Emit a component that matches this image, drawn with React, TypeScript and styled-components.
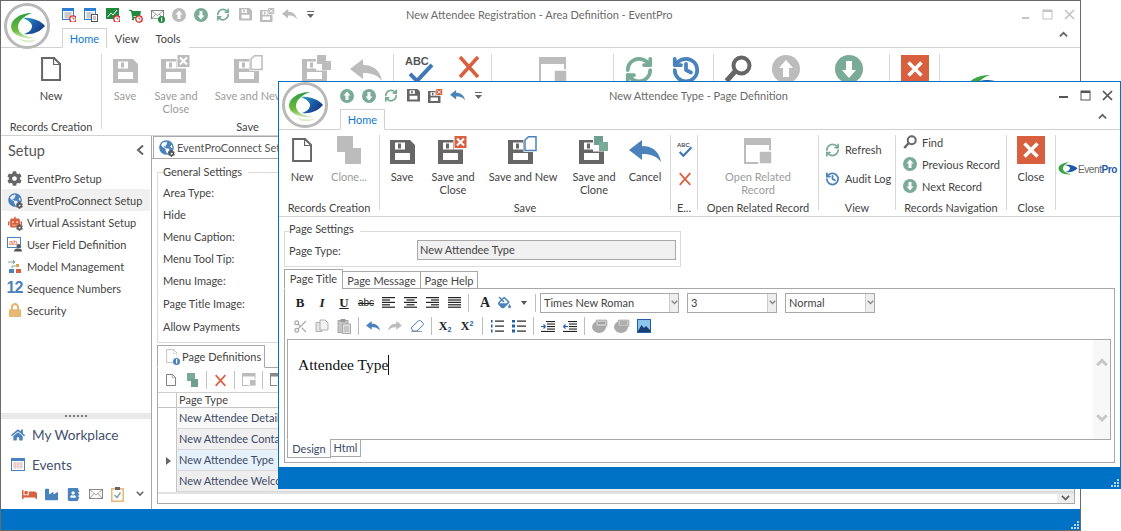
import React from "react";
import styled, { createGlobalStyle } from "styled-components";
import { RefreshCw, History, Scissors } from "lucide-react";
import { FaCog, FaGlobeAmericas, FaRobot, FaLock, FaHome, FaBed, FaIndustry, FaAddressBook, FaShoppingCart, FaFillDrip } from "react-icons/fa";

const SAGE = "#7aab98";
const GRAY = "#bcbcbc";
const DARK = "#666666";
const BLUE = "#4a82bc";
const RED = "#d9603f";
const UI = 'Lato, "Open Sans", sans-serif';
const FS = "11px";

const Global = createGlobalStyle`
  html, body { margin: 0; padding: 0; background: #fff; }
  #root { width: 1121px; height: 531px; position: relative; overflow: hidden; font-family: ${UI}; font-size: ${FS}; color: #444; }
  * { box-sizing: border-box; }
`;

/* ---------- icons ---------- */
const Svg = styled.svg`display: block; flex: none;`;
type IP = { s?: number; c?: string };

const LogoMark = ({ s = 46 }: { s?: number }) => (
  <Svg width={s} height={s} viewBox="0 0 46 46">
    <defs>
      <linearGradient id="lgG" x1="0" y1="0" x2="0" y2="1"><stop offset="0" stopColor="#2f9e3f" /><stop offset="0.7" stopColor="#6cbc3c" /><stop offset="1" stopColor="#d6ebc0" /></linearGradient>
      <linearGradient id="lgB" x1="0" y1="0" x2="1" y2="0.6"><stop offset="0" stopColor="#27a3c9" /><stop offset="0.6" stopColor="#1c5aa6" /><stop offset="1" stopColor="#17397f" /></linearGradient>
    </defs>
    <circle cx="23" cy="23" r="21.5" fill="#fff" stroke="#b9b9b9" strokeWidth="3" />
    <path d="M28 10C15 10 7 17 7 24C8 32 18 37 34 35C23 35 14 31 14 24C14 18 20 13 28 10Z" fill="url(#lgG)" />
    <path d="M19 15C28 14 37 18 41 23C36 29 28 32 20 31C26 29 28 26 28 23C28 20 24 17 19 15Z" fill="url(#lgB)" />
    <path d="M14 35C21 38 28 38 33 36.500C27 41 18 40 14 35Z" fill="#d8ecc6" />
  </Svg>
);

const PageI = ({ s = 24, c = DARK, sw = 2 }: IP & { sw?: number }) => (
  <Svg width={s * 0.84} height={s} viewBox="0 0 20 24">
    <path d="M1 1H13L19 7V23H1Z" fill="#fff" stroke={c} strokeWidth={sw} strokeLinejoin="miter" />
    <path d="M12.500 1V7.500H19" fill="none" stroke={c} strokeWidth={sw * 0.6} />
  </Svg>
);
const CloneI = ({ s = 28, c = GRAY, c2 }: IP & { c2?: string }) => (
  <Svg width={s * 0.857} height={s} viewBox="0 0 24 28">
    <rect x="0" y="0" width="16" height="16" fill={c} />
    <rect x="8" y="12" width="16" height="16" fill={c2 ?? c} />
  </Svg>
);
const FloppyBody = ({ c, y = 4 }: { c: string; y?: number }) => (
  <g transform={`translate(0 ${y})`}>
    <path fillRule="evenodd" d="M0 0H20L25 5V24H0Z M5 13V20H20V13Z" fill={c} />
    <rect x="5" y="2.500" width="10" height="7" fill="#fff" />
    <rect x="8" y="3.500" width="3" height="5" fill={c} />
  </g>
);
const Floppy = ({ c = DARK, w = 25 }: { c?: string; w?: number }) => (
  <Svg width={w} height={w * 24 / 25} viewBox="0 0 25 24"><FloppyBody c={c} y={0} /></Svg>
);
type Badge = "x" | "new" | "clone";
const BadgeG = ({ b, c }: { b: Badge; c?: string }) => {
  if (b === "x")
    return (
      <g>
        <rect x="15.500" y="-0.500" width="14" height="14" fill="#fff" />
        <rect x="16.500" y="0" width="12" height="12" fill={c ?? RED} />
        <path d="M19 2.500L26 9.500M26 2.500L19 9.500" stroke="#fff" strokeWidth="2" />
      </g>
    );
  if (b === "new")
    return (
      <g>
        <path d="M16.500 3.500L20 0H28.500V15H16.500Z" fill="#fff" stroke="#fff" strokeWidth="2" />
        <path d="M17 4L20.500 0.700H28V14.500H17Z" fill="#fff" stroke={c ?? BLUE} strokeWidth="1.500" />
      </g>
    );
  return (
    <g>
      <rect x="14" y="-0.500" width="16" height="16" fill="#fff" />
      <rect x="15" y="0" width="9" height="9" fill={c ?? "#6f9f90"} />
      <rect x="20" y="6" width="9" height="9" fill={c ?? SAGE} />
    </g>
  );
};
const FloppyB = ({ b, c = DARK, bc, w = 30 }: { b: Badge; c?: string; bc?: string; w?: number }) => (
  <Svg width={w} height={w * 28 / 30} viewBox="0 0 30 28"><FloppyBody c={c} /><BadgeG b={b} c={bc} /></Svg>
);
const UndoI = ({ w = 32, c = BLUE }: { w?: number; c?: string }) => (
  <Svg width={w} height={w * 22 / 32} viewBox="0 0 32 22">
    <path d="M0 10L13 0V6C22 6 30 10 32 22C27 15 20 14 13 14V20Z" fill={c} />
  </Svg>
);
const RedoI = ({ w = 14, c = GRAY }: { w?: number; c?: string }) => (
  <Svg width={w} height={w * 22 / 32} viewBox="0 0 32 22">
    <path d="M32 10L19 0V6C10 6 2 10 0 22C5 15 12 14 19 14V20Z" fill={c} />
  </Svg>
);
const UpI = ({ s = 14, c = SAGE }: IP) => (
  <Svg width={s} height={s} viewBox="0 0 28 28">
    <circle cx="14" cy="14" r="14" fill={c} />
    <path d="M14 5L21 13H17V22H11V13H7Z" fill="#fff" />
  </Svg>
);
const DownI = ({ s = 14, c = SAGE }: IP) => (
  <Svg width={s} height={s} viewBox="0 0 28 28">
    <circle cx="14" cy="14" r="14" fill={c} />
    <path d="M14 23L21 15H17V6H11V15H7Z" fill="#fff" />
  </Svg>
);
const CrossI = ({ s = 24, c = RED, sw = 3.500 }: IP & { sw?: number }) => (
  <Svg width={s} height={s} viewBox="0 0 24 24">
    <path d="M3 2L21 22M21 2L3 22" stroke={c} strokeWidth={sw} />
  </Svg>
);
const SpellI = ({ w = 30 }: { w?: number }) => (
  <Svg width={w} height={w * 0.93} viewBox="0 0 30 28">
    <text x="0" y="10" fontFamily='"Liberation Sans", sans-serif' fontWeight="700" fontSize="11" fill="#555">ABC</text>
    <path d="M5 19L12 26L27 10" fill="none" stroke="#3f78b5" strokeWidth="4" />
  </Svg>
);
const RelatedI = ({ s = 28, c = GRAY }: IP) => (
  <Svg width={s} height={s} viewBox="0 0 28 28">
    <rect x="1" y="1" width="25" height="24" fill="#fff" stroke={c} strokeWidth="2" />
    <rect x="1" y="1" width="25" height="6" fill={c} />
    <rect x="15" y="13" width="13" height="13" fill={c} stroke="#fff" strokeWidth="1.500" />
  </Svg>
);
const MagnifierI = ({ s = 28, c = DARK }: IP) => (
  <Svg width={s} height={s} viewBox="0 0 28 28">
    <circle cx="17.500" cy="10.500" r="8" fill="#fff" stroke={c} strokeWidth="4" />
    <path d="M11 16.500L2.500 26" stroke={c} strokeWidth="5" />
  </Svg>
);
const CloseBoxI = ({ s = 28 }: IP) => (
  <Svg width={s} height={s} viewBox="0 0 28 28">
    <rect width="28" height="28" fill={RED} />
    <path d="M7.500 7.500L20.500 20.500M20.500 7.500L7.500 20.500" stroke="#fff" strokeWidth="3.500" />
  </Svg>
);
const CaretLines = () => (
  <Svg width={14} height={10} viewBox="0 0 14 10">
    <rect x="3" y="1" width="7" height="1" fill="#666" />
    <path d="M3 4H10L6.500 8Z" fill="#666" />
  </Svg>
);
const Chevron = ({ up, c = "#777", w = 10, sw = 2 }: { up?: boolean; c?: string; w?: number; sw?: number }) => (
  <Svg width={w} height={w * 0.7} viewBox="0 0 10 7">
    <path d={up ? "M1 6L5 2L9 6" : "M1 1L5 5L9 1"} fill="none" stroke={c} strokeWidth={sw} />
  </Svg>
);
const ChevronLeft = () => (
  <Svg width={8} height={10} viewBox="0 0 8 10">
    <path d="M7 0.500L2 5L7 9.500" fill="none" stroke="#666" strokeWidth="2" />
  </Svg>
);
const ClockBadge = ({ x = 8, y = 8 }: { x?: number; y?: number }) => (
  <g>
    <circle cx={x + 3} cy={y + 3} r="3.200" fill="#fff" stroke="#e0262b" strokeWidth="1.300" />
    <path d={`M${x + 3} ${y + 1.200}V${y + 3}H${x + 4.600}`} fill="none" stroke="#333" strokeWidth="0.700" />
  </g>
);
const CalAlarm = () => (
  <Svg width={14} height={14} viewBox="0 0 14 14">
    <rect x="0.500" y="0.500" width="11" height="11" fill="#fff" stroke="#2a7fd4" />
    <rect x="0.500" y="0.500" width="11" height="2.500" fill="#2a7fd4" />
    <path d="M2 5H10M2 7H10M2 9H10M4 4V11M6 4V11M8 4V11" stroke="#999" strokeWidth="0.600" />
    <ClockBadge />
  </Svg>
);
const CalList = () => (
  <Svg width={14} height={14} viewBox="0 0 14 14">
    <rect x="0.500" y="0.500" width="11" height="11" fill="#fff" stroke="#2a7fd4" />
    <rect x="0.500" y="0.500" width="11" height="2.500" fill="#2a7fd4" />
    <path d="M2 5H10M2 7H10M2 9H10M4 4V11M6 4V11" stroke="#999" strokeWidth="0.600" />
    <rect x="7.500" y="6.500" width="6" height="7" fill="#fff" stroke="#555" />
    <path d="M9 9H12M9 11H12" stroke="#555" strokeWidth="0.700" />
  </Svg>
);
const ChartAlarm = () => (
  <Svg width={14} height={14} viewBox="0 0 14 14">
    <rect x="0" y="0" width="13" height="11" fill="#1f8a3b" />
    <path d="M1.500 9L5 5L7 7L11 2" fill="none" stroke="#fff" strokeWidth="1" />
    <ClockBadge />
  </Svg>
);
const CartAlarm = () => (
  <Wrap $s={14}>
    <FaShoppingCart size={12} color="#1f8a3b" />
    <Over $r={-1} $b={-1}><Svg width={8} height={8} viewBox="0 0 8 8"><ClockBadge x={1} y={1} /></Svg></Over>
  </Wrap>
);
const MailI = ({ w = 14, c = "#888" }: { w?: number; c?: string }) => (
  <Svg width={w} height={w * 0.72} viewBox="0 0 14 10">
    <rect x="0.500" y="0.500" width="13" height="9" fill="#fff" stroke={c} />
    <path d="M0.500 0.500L7 6L13.500 0.500M0.500 9.500L5 4.500M13.500 9.500L9 4.500" fill="none" stroke={c} strokeWidth="0.800" />
  </Svg>
);
const MailBadge = () => (
  <Wrap $s={14}>
    <MailI w={13} c="#777" />
    <Over $r={-1} $b={-1}><Svg width={7} height={7} viewBox="0 0 7 7"><circle cx="3.500" cy="3.500" r="3.500" fill="#1f8a3b" /><rect x="3" y="1.500" width="1.200" height="4" fill="#fff" /></Svg></Over>
  </Wrap>
);
const Lines = ({ kind }: { kind: "l" | "c" | "r" | "j" }) => {
  const short = 8, long = 13;
  const rows = [long, short, long, short, long];
  return (
    <Svg width={13} height={11} viewBox="0 0 13 11">
      {rows.map((len, i) => {
        const L = kind === "j" ? long : len;
        const x = kind === "c" ? (13 - L) / 2 : kind === "r" ? 13 - L : 0;
        return <rect key={i} x={x} y={i * 2.4} width={L} height="1.200" fill="#222" />;
      })}
    </Svg>
  );
};
const ListI = ({ num }: { num?: boolean }) => (
  <Svg width={14} height={13} viewBox="0 0 14 13">
    {[1, 6, 11].map((y) => (
      <g key={y}>
        {num ? <rect x="1" y={y - 1.500} width="1.500" height="3" fill="#1d5fa8" /> : <rect x="0" y={y - 1.500} width="3" height="3" fill="#1d5fa8" />}
        <rect x="5" y={y - 0.500} width="9" height="1.200" fill="#222" />
      </g>
    ))}
  </Svg>
);
const IndentI = ({ out }: { out?: boolean }) => (
  <Svg width={14} height={11} viewBox="0 0 14 11">
    <rect x="5" y="0" width="9" height="1.100" fill="#222" />
    <rect x="6" y="2.500" width="8" height="1.100" fill="#222" />
    <rect x="6" y="5" width="8" height="1.100" fill="#222" />
    <rect x="6" y="7.500" width="8" height="1.100" fill="#222" />
    <rect x="0" y="9.900" width="14" height="1.100" fill="#222" />
    <path d={out ? "M0.500 5.500H5M0.500 5.500L2.500 3.500M0.500 5.500L2.500 7.500" : "M0 5.500H4.500M4.500 5.500L2.500 3.500M4.500 5.500L2.500 7.500"} stroke="#1d5fa8" strokeWidth="1.200" fill="none" />
  </Svg>
);
const CopyI = () => (
  <Svg width={14} height={14} viewBox="0 0 14 14">
    <path d="M1 3.500H7V12.500H1Z" fill="#e4e4e4" stroke="#b0b0b0" />
    <path d="M5 1H10L13 4V11H5Z" fill="#f2f2f2" stroke="#b0b0b0" />
  </Svg>
);
const PasteI = () => (
  <Svg width={14} height={15} viewBox="0 0 14 15">
    <rect x="1" y="1.500" width="10" height="12" fill="#c4c4c4" stroke="#aaa" />
    <rect x="3.500" y="0" width="5" height="3" fill="#999" />
    <rect x="5.500" y="5" width="8" height="9.500" fill="#e0e0e0" stroke="#aaa" />
    <path d="M7 8H12M7 10H12M7 12H12" stroke="#aaa" />
  </Svg>
);
const EraserI = () => (
  <Svg width={14} height={12} viewBox="0 0 14 12">
    <path d="M1 8L8 1.200C9 .3 10 .3 11 1L13 3C13.600 3.800 13.500 4.600 13 5.200L7 11H3Z" fill="#fff" stroke="#4a7db5" />
    <path d="M1 11.500H12" stroke="#888" strokeWidth="0.800" />
  </Svg>
);
const StampI = ({ bars }: { bars?: boolean }) => (
  <Svg width={16} height={14} viewBox="0 0 16 14">
    <ellipse cx="7" cy="8" rx="7" ry="6" fill="#aaa" />
    <rect x="4" y="1" width="11" height="6.500" rx="1" fill="#c8c8c8" stroke="#999" strokeWidth="0.600" />
    {bars ? <path d="M6 3H13M6 5H13" stroke="#888" strokeWidth="0.800" /> : <path d="M6 4H13" stroke="#888" strokeWidth="1.200" />}
  </Svg>
);
const PictureI = () => (
  <Svg width={14} height={14} viewBox="0 0 14 14">
    <rect x="0.500" y="0.500" width="13" height="13" fill="#8cc4ea" stroke="#1d5fa8" />
    <path d="M1 12L4.500 6L7 9L9 7L13 11V13H1Z" fill="#173f73" />
  </Svg>
);
const Grip = () => (
  <Svg width={9} height={9} viewBox="0 0 9 9">
    {[[7, 1], [4, 4], [7, 4], [1, 7], [4, 7], [7, 7]].map(([x, y]) => (
      <rect key={`${x}${y}`} x={x} y={y} width="2" height="2" fill="#b9d4ec" />
    ))}
  </Svg>
);
const SmallLogo = ({ s = 20 }: { s?: number }) => (
  <Svg width={s} height={s * 0.7} viewBox="0 0 40 28">
    <path d="M22 1C10 1 1 6 1 13C1 21 14 27 30 24C19 24 10 20 10 13C10 8 15 3 22 1Z" fill="#3aa63f" />
    <path d="M13 6C24 4 35 8 39 13C33 19 24 22 15 20C22 18 24 15 24 12C24 9 19 7 13 6Z" fill="#1c5aa6" />
  </Svg>
);
const ModelI = () => (
  <Svg width={15} height={15} viewBox="0 0 15 15">
    <path d="M1 3H8M8 3L6 1.500M8 3L6 4.500" stroke="#8aa98e" strokeWidth="1.200" fill="none" />
    <rect x="9" y="5" width="3" height="3" fill="#e0a24f" />
    <rect x="2" y="10" width="5" height="4" fill="#4a82bc" />
    <rect x="9" y="10" width="5" height="4" fill="#d9603f" />
    <path d="M9 7H5V9" stroke="#7aab98" fill="none" />
  </Svg>
);
const FieldI = () => (
  <Wrap $s={15}>
    <Svg width={15} height={15} viewBox="0 0 15 15">
      <rect x="0.500" y="0.500" width="13" height="10" fill="#fff" stroke="#4a82bc" />
      <text x="2" y="8" fontSize="7.500" fontFamily='"Liberation Sans", sans-serif' fill="#d9603f">ab</text>
      <circle cx="11.500" cy="9" r="2" fill="#555" />
      <path d="M7 14.500C7 12 9 11.500 11.500 11.500C14 11.500 15 12.500 15 14.500Z" fill="#555" />
    </Svg>
  </Wrap>
);
const CalSide = () => (
  <Svg width={14} height={13} viewBox="0 0 14 13">
    <rect x="0.500" y="0.500" width="13" height="12" fill="#fff" stroke="#4a82bc" />
    <rect x="1" y="1" width="12" height="2" fill="#4a82bc" />
    <path d="M2 5H12M2 7H12M2 9H12M4 4V11M7 4V11M10 4V11" stroke="#d8a0a0" strokeWidth="0.600" />
  </Svg>
);
const ClipI = () => (
  <Svg width={13} height={15} viewBox="0 0 13 15">
    <rect x="0.800" y="1.800" width="11.400" height="12.400" fill="#fff" stroke="#e5b876" strokeWidth="1.500" />
    <rect x="4" y="0" width="5" height="3" fill="#666" />
    <path d="M3.500 8L6 10.500L9.500 5.500" stroke="#7aab98" strokeWidth="1.500" fill="none" />
  </Svg>
);
const TinyGear = styled(FaCog)`position: absolute; right: -1px; bottom: -1px; background: transparent;`;

/* ---------- structure ---------- */
const Wrap = styled.span<{ $s: number }>`
  position: relative; display: inline-flex; align-items: center; justify-content: center; flex: none;
  width: ${(p) => p.$s}px; height: ${(p) => p.$s}px;
`;
const Over = styled.span<{ $r: number; $b: number }>`
  position: absolute; right: ${(p) => p.$r}px; bottom: ${(p) => p.$b}px; display: block;
`;
const Win = styled.section<{ $x: number; $y: number; $w: number; $h: number; $border: string }>`
  position: absolute; left: ${(p) => p.$x}px; top: ${(p) => p.$y}px; width: ${(p) => p.$w}px; height: ${(p) => p.$h}px;
  border: 1px solid ${(p) => p.$border}; background: #fff; display: flex; flex-direction: column;
`;
const Header = styled.header<{ $h: number }>`
  flex: none; position: relative; height: ${(p) => p.$h}px; padding-left: 61px; border-bottom: 1px solid #d2d2d2;
  display: flex; flex-direction: column;
`;
const LogoSlot = styled.div<{ $top: number }>`
  position: absolute; left: 3px; top: ${(p) => p.$top}px; z-index: 2;
`;
const TitleRow = styled.div`flex: none; height: 27px; display: flex; align-items: center;`;
const Qat = styled.div`display: flex; gap: 8px; align-items: center; flex: none;`;
const QatCell = styled.span`width: 14px; height: 14px; display: flex; align-items: center; justify-content: center; flex: none;`;
const Title = styled.div<{ $left: number }>`margin-left: ${(p) => p.$left}px; margin-top: -1px; color: #6a6a6a; font-size: ${FS}; white-space: nowrap;`;
const WinCtl = styled.div<{ $right: number }>`margin-left: auto; margin-right: ${(p) => p.$right}px; display: flex;`;
const WinBtn = styled.span`width: 22px; display: flex; justify-content: center; align-items: center;`;
const TabRow = styled.div`flex: 1; display: flex; align-items: stretch; position: relative;`;
const RibbonTab = styled.div<{ $active?: boolean; $w: number }>`
  width: ${(p) => p.$w}px; margin-bottom: -1px; display: flex; align-items: center; justify-content: center; font-size: ${FS};
  color: ${(p) => (p.$active ? "#1377cf" : "#444")}; background: #fff;
  border: 1px solid ${(p) => (p.$active ? "#d2d2d2" : "transparent")}; border-bottom: 1px solid ${(p) => (p.$active ? "#fff" : "transparent")};
`;
const Collapse = styled.span<{ $right: number }>`margin-left: auto; margin-right: ${(p) => p.$right}px; align-self: center; margin-top: -6px;`;

const Ribbon = styled.div<{ $h: number; $top: number }>`
  flex: none; height: ${(p) => p.$h}px; padding-top: ${(p) => p.$top}px; border-bottom: 1px solid #d2d2d2; display: flex; align-items: flex-start;
`;
const Group = styled.div<{ $w: number; $plain?: boolean }>`
  flex: none; width: ${(p) => p.$w}px; height: 75px; display: flex; flex-direction: column;
  border-right: 1px solid ${(p) => (p.$plain ? "transparent" : "#d8d8d8")};
`;
const GroupBody = styled.div<{ $col?: boolean; $center?: boolean; $pad?: number; $mt?: number }>`
  height: 66px; flex: none; display: flex; flex-direction: ${(p) => (p.$col ? "column" : "row")};
  justify-content: ${(p) => (p.$center ? "center" : "flex-start")}; padding-left: ${(p) => p.$pad ?? 0}px;
  ${(p) => (p.$mt ? `margin-top: ${p.$mt}px; margin-bottom: ${-p.$mt}px;` : "")}
`;
const GroupLabel = styled.div`height: 14px; line-height: 14px; text-align: center; white-space: nowrap; color: #444; font-size: ${FS};`;
const Big = styled.div<{ $w: number; $off?: boolean }>`
  flex: none; width: ${(p) => p.$w}px; display: flex; flex-direction: column; align-items: center;
  text-align: center; line-height: 13px; white-space: nowrap; color: ${(p) => (p.$off ? "#9c9c9c" : "#444")}; font-size: ${FS};
`;
const BigIcon = styled.div<{ $pt?: number }>`height: 35px; flex: none; display: flex; align-items: flex-start; justify-content: center; padding-top: ${(p) => p.$pt ?? 1}px;`;
const Small = styled.div<{ $h: number }>`
  flex: none; height: ${(p) => p.$h}px; display: flex; align-items: center; gap: 5px; white-space: nowrap; color: #444; font-size: ${FS};
`;
const SmallIcon = styled.span`width: 15px; display: flex; justify-content: center; flex: none;`;
const MiniBrand = styled.div<{ $left: number; $top: number }>`
  display: flex; align-items: center; margin-left: ${(p) => p.$left}px; margin-top: ${(p) => p.$top}px; font-family: "Liberation Sans", sans-serif; font-size: 10px; color: #666; letter-spacing: -0.4px;
  b { color: #1c5aa6; }
`;
const Status = styled.footer`
  flex: none; height: 21px; background: #0072c6; display: flex; justify-content: flex-end; align-items: flex-end; padding: 0 1px 1px 0;
`;

/* window 1 body */
const Desk = styled.div`flex: 1; min-height: 0; display: flex;`;
const Side = styled.aside`flex: none; width: 151px; border-right: 1px solid #a8a8a8; display: flex; flex-direction: column;`;
const SideHead = styled.div`
  flex: none; height: 32px; padding: 0 7px 4px 7px; display: flex; align-items: center; justify-content: space-between;
  font-size: 14.5px; color: #555;
`;
const SideList = styled.div`flex: 1; padding: 0 1px; margin-top: -1px;`;
const SideItem = styled.div<{ $on?: boolean }>`
  height: 22px; display: flex; align-items: center; gap: 5px; padding-left: 5px; color: #444; white-space: nowrap;
  background: ${(p) => (p.$on ? "#f0f0f0" : "transparent")}; font-size: ${FS};
`;
const Splitter = styled.div`
  flex: none; height: 6px; background: #e9e9e9; display: flex; justify-content: center; align-items: center; gap: 2px;
  i { width: 2px; height: 2px; background: #777; display: block; }
`;
const NavItem = styled.div`
  flex: none; height: 30px; display: flex; align-items: center; gap: 7px; padding: 1px 0 0 10px; font-size: 13.6px; color: #44506e;
`;
const NavTray = styled.div`
  flex: none; height: 30px; display: flex; align-items: center; padding-left: 21px; gap: 7px;
`;
const TrayCell = styled.span`width: 15px; display: flex; justify-content: center; flex: none;`;
const Main = styled.main`flex: 1; min-width: 0; display: flex; flex-direction: column;`;
const DocBar = styled.div`
  flex: none; height: 23px; border-bottom: 1px solid #a8a8a8; padding-left: 1px; display: flex;
`;
const DocTab = styled.div`
  width: 300px; height: 22px; border: 1px solid #a8a8a8; border-bottom: 0; display: flex; align-items: center; gap: 3px; padding-left: 4px; white-space: nowrap; color: #555;
`;
const MainPad = styled.div`flex: 1; min-height: 0; display: flex; flex-direction: column; padding: 0 5px 5px 5px;`;
const Box = styled.fieldset<{ $w?: number; $h: number; $mt: number; $ml?: number }>`
  flex: none; margin: ${(p) => p.$mt}px 0 0 ${(p) => p.$ml ?? 0}px; padding: 0 0 0 ${(p) => (p.$w ? 4 : 5)}px; min-width: 0; border: 1px solid #dadada;
  height: ${(p) => p.$h}px; ${(p) => (p.$w ? `width: ${p.$w}px;` : "")}
`;
const Legend = styled.legend<{ $pb?: number }>`
  padding: 0 6px 0 0; padding-bottom: ${(p) => p.$pb ?? 0}px; margin-left: 0; line-height: 14px; color: #444; font-size: ${FS}; background: transparent;
`;
const FieldRow = styled.div`
  height: 22px; display: flex; align-items: center; color: #444; white-space: nowrap;
  &:nth-child(n+5) { height: 23px; }
`;
const FieldStack = styled.div`padding-top: 2px;`;
const PanelTabs = styled.div`flex: none; height: 22px; margin-top: 2px; display: flex; align-items: flex-end;`;
const PanelTab = styled.div`
  width: 108px; height: 23px; margin-bottom: -1px; position: relative; z-index: 1; background: #fff; border: 1px solid #a8a8a8; border-bottom-color: #fff;
  display: flex; align-items: center; gap: 3px; padding: 0 0 1px 6px; color: #444; white-space: nowrap;
`;
const Panel = styled.div`flex: 1; min-height: 0; border: 1px solid #a8a8a8; display: flex; flex-direction: column;`;
const MiniBar = styled.div`flex: none; height: 24px; display: flex; align-items: center; padding-left: 3px;`;
const MiniCell = styled.span`width: 21px; display: flex; align-items: center; justify-content: center; flex: none;`;
const MiniSep = styled.i<{ $h?: number }>`
  display: block; flex: none; width: 1px; height: ${(p) => p.$h ?? 18}px; background: #c4c4c4; margin: 0 3px;
`;
const GridBlock = styled.div`flex: 1; min-height: 0;`;
const GridHead = styled.div`
  height: 16px; border-top: 1px solid #d0d0d0; border-bottom: 1px solid #c4c4c4; padding-left: 18px; display: flex;
`;
const GridHeadCell = styled.div`flex: 1; border-left: 1px solid #c4c4c4; padding-left: 2px; line-height: 14px; color: #444;`;
const GridRow = styled.div<{ $bg: string }>`height: 21px; display: flex;`;
const RowMark = styled.div`width: 18px; flex: none; display: flex; align-items: center; justify-content: center; padding-left: 2px;`;
const RowCell = styled.div<{ $bg: string }>`
  flex: 1; background: ${(p) => p.$bg}; border-left: 1px solid #c4c4c4; border-bottom: 1px solid #d8d8d8; padding-left: 2px; line-height: 20px; color: #3d4a68; white-space: nowrap;
`;
const Tri = styled.i`display: block; width: 0; height: 0; border-left: 5px solid #666; border-top: 4px solid transparent; border-bottom: 4px solid transparent;`;
const HScroll = styled.div`flex: none; height: 11px; border-top: 2px solid #e2e2e2; display: flex; justify-content: flex-end;`;
const HScrollBtn = styled.div`width: 17px; background: #eee; display: flex; align-items: center; justify-content: center;`;

/* window 2 body */
const Form = styled.div`flex: 1; min-height: 0; display: flex; flex-direction: column; padding: 0 5px 4px 5px;`;
const InputRow = styled.div`display: flex; align-items: center; height: 20px;`;
const InputLabel = styled.label`width: 128px; flex: none; color: #444;`;
const ReadOnly = styled.div`
  width: 259px; height: 20px; border: 1px solid #a8a8a8; background: #f0f0f0; padding-left: 2px; line-height: 18px; color: #444;
`;
const EdTabs = styled.div`flex: none; height: 19px; margin-top: 2px; display: flex; align-items: flex-end; position: relative; z-index: 1;`;
const EdTab = styled.div<{ $w: number; $on?: boolean }>`
  width: ${(p) => p.$w}px; height: ${(p) => (p.$on ? 20 : 18)}px; margin-bottom: -1px; background: #fff; border: 1px solid #a8a8a8; margin-left: ${(p) => (p.$on ? 0 : -1)}px;
  border-bottom-color: ${(p) => (p.$on ? "#fff" : "#a8a8a8")}; display: flex; align-items: center; justify-content: center; color: #444; white-space: nowrap; padding-bottom: ${(p) => (p.$on ? 1 : 0)}px;
`;
const EdPanel = styled.div`flex: 1; min-height: 0; border: 1px solid #a8a8a8; padding: 0 3px 0 2px; display: flex; flex-direction: column;`;
const ToolRow = styled.div<{ $h: number; $pb?: number }>`flex: none; height: ${(p) => p.$h}px; padding-bottom: ${(p) => p.$pb ?? 0}px; display: flex; align-items: center; padding-left: 2px;`;
const Tool = styled.span<{ $w?: number }>`
  width: ${(p) => p.$w ?? 22}px; height: 20px; flex: none; display: flex; align-items: center; justify-content: center;
  color: #222; font-family: "Liberation Serif", serif;
`;
const SerifB = styled.b<{ $size?: number }>`font-size: ${(p) => p.$size ?? 13}px; font-weight: 700;`;
const SerifI = styled.i`font-size: 13px; font-weight: 700;`;
const SerifU = styled.b`font-size: 13px; font-weight: 700; text-decoration: underline;`;
const Strike = styled.span`font-family: "Liberation Sans", sans-serif; font-size: 10px; text-decoration: line-through;`;
const ScriptB = styled.b`font-size: 12px; position: relative;`;
const Sub = styled.sub`font-size: 7px; color: #1d5fa8; font-family: "Liberation Sans", sans-serif; vertical-align: -2px; line-height: 0;`;
const Sup = styled.sup`font-size: 7px; color: #1d5fa8; font-family: "Liberation Sans", sans-serif; vertical-align: 4px; line-height: 0;`;
const ToolSep = styled.i<{ $l?: number; $r?: number }>`
  display: block; flex: none; width: 1px; height: 18px; background: #bdbdbd; margin: 0 ${(p) => p.$r ?? 3}px 0 ${(p) => p.$l ?? 3}px;
`;
const Select = styled.div<{ $w: number; $ml: number }>`
  flex: none; width: ${(p) => p.$w}px; height: 20px; margin-left: ${(p) => p.$ml}px; border: 1px solid #a8a8a8; display: flex; align-items: center;
  padding-left: 3px; color: #444; justify-content: space-between;
`;
const SelectBtn = styled.span`width: 9px; height: 18px; background: #eee; border-left: 1px solid #ccc; display: flex; align-items: center; justify-content: center;`;
const Editor = styled.div`flex: none; height: 101px; border: 1px solid #a8a8a8; display: flex;`;
const EditArea = styled.div`flex: 1; padding: 15px 0 0 10px;`;
const EditText = styled.span`
  font-family: "Liberation Serif", serif; font-size: 15.500px; line-height: 20px; color: #111; border-right: 1px solid #111; display: inline-block;
`;
const VScroll = styled.div`
  flex: none; width: 17px; background: #f8f8f8; display: flex; flex-direction: column; align-items: center; justify-content: space-between; padding: 18px 0 17px;
`;
const ModeTabs = styled.div`flex: none; display: flex; align-items: flex-start;`;
const ModeTab = styled.div<{ $w: number; $on?: boolean }>`
  width: ${(p) => p.$w}px; height: ${(p) => (p.$on ? 19 : 18)}px; margin-top: -1px; margin-left: ${(p) => (p.$on ? 0 : -1)}px; padding-bottom: 1px; background: #fff;
  border: 1px solid #a8a8a8; border-top-color: ${(p) => (p.$on ? "#fff" : "#a8a8a8")}; display: flex; align-items: center; justify-content: center;
  color: #3d4a68; position: relative;
`;
const NumberTwelve = styled.b`
  font-family: "Liberation Sans", sans-serif; font-size: 16px; color: ${BLUE}; letter-spacing: -1px;
`;

const F = 16;
export default function App() {
  return (
    <>
      <Global />
      {/* main window */}
      <Win $x={0} $y={0} $w={1081} $h={531} $border="#6a6a6a">
        <LogoSlot $top={2}><LogoMark /></LogoSlot>
        <Header $h={47}>
          <TitleRow>
            <Qat>
              <QatCell><CalAlarm /></QatCell>
              <QatCell><CalList /></QatCell>
              <QatCell><ChartAlarm /></QatCell>
              <QatCell><CartAlarm /></QatCell>
              <QatCell><MailBadge /></QatCell>
              <QatCell><UpI c={GRAY} /></QatCell>
              <QatCell><DownI /></QatCell>
              <QatCell><RefreshCw size={15} color={SAGE} strokeWidth={3} /></QatCell>
              <QatCell><Floppy c={GRAY} w={13} /></QatCell>
              <QatCell><FloppyB b="x" c={GRAY} bc={GRAY} w={15} /></QatCell>
              <QatCell><UndoI w={15} c={GRAY} /></QatCell>
              <QatCell><CaretLines /></QatCell>
            </Qat>
            <Title $left={88}>New Attendee Registration - Area Definition - EventPro</Title>
            <WinCtl $right={0}>
              <WinBtn><Svg width={9} height={10} viewBox="0 0 9 10"><rect x="1" y="7" width="7" height="2" fill="#c4c4c4" /></Svg></WinBtn>
              <WinBtn><Svg width={11} height={11} viewBox="0 0 11 11"><rect x="1" y="1" width="9" height="9" fill="none" stroke="#c4c4c4" /><rect x="1" y="1" width="9" height="2" fill="#c4c4c4" /></Svg></WinBtn>
              <WinBtn><Svg width={11} height={11} viewBox="0 0 11 11"><path d="M1 1L10 10M10 1L1 10" stroke="#c4c4c4" strokeWidth="1.700" /></Svg></WinBtn>
            </WinCtl>
          </TitleRow>
          <TabRow>
            <RibbonTab $active $w={45}>Home</RibbonTab>
            <RibbonTab $w={40}>View</RibbonTab>
            <RibbonTab $w={42}>Tools</RibbonTab>
            <Collapse $right={12}><Chevron up c="#666" w={9} /></Collapse>
          </TabRow>
        </Header>
        <Ribbon $h={88} $top={6}>
          <Group $w={101}>
            <GroupBody $center>
              <Big $w={60}><BigIcon $pt={3}><PageI /></BigIcon>New</Big>
            </GroupBody>
            <GroupLabel>Records Creation</GroupLabel>
          </Group>
          <Group $w={292}>
            <GroupBody>
              <Big $w={46} $off><BigIcon $pt={5}><Floppy c={GRAY} /></BigIcon>Save</Big>
              <Big $w={56} $off><BigIcon><FloppyB b="x" c={GRAY} bc={GRAY} /></BigIcon>Save and<br />Close</Big>
              <Big $w={90} $off><BigIcon><FloppyB b="new" c={GRAY} bc={GRAY} /></BigIcon>Save and New</Big>
              <Big $w={46} $off><BigIcon><FloppyB b="clone" c={GRAY} bc={GRAY} /></BigIcon></Big>
              <Big $w={52} $off><BigIcon $pt={5}><UndoI c={GRAY} /></BigIcon></Big>
            </GroupBody>
            <GroupLabel>Save</GroupLabel>
          </Group>
          <Group $w={98}>
            <GroupBody $pad={4}>
              <Big $w={44}><BigIcon><SpellI /></BigIcon></Big>
              <Big $w={54}><BigIcon><CrossI /></BigIcon></Big>
            </GroupBody>
          </Group>
          <Group $w={122}>
            <GroupBody $center><Big $w={60}><BigIcon $pt={3}><RelatedI c={GRAY} /></BigIcon></Big></GroupBody>
          </Group>
          <Group $w={100}>
            <GroupBody>
              <Big $w={50}><BigIcon><RefreshCw size={30} color={SAGE} strokeWidth={3} /></BigIcon></Big>
              <Big $w={44}><BigIcon><History size={30} color={BLUE} strokeWidth={3} /></BigIcon></Big>
            </GroupBody>
          </Group>
          <Group $w={176}>
            <GroupBody>
              <Big $w={48}><BigIcon><MagnifierI /></BigIcon></Big>
              <Big $w={48}><BigIcon><UpI s={28} c={GRAY} /></BigIcon></Big>
              <Big $w={78}><BigIcon><DownI s={28} /></BigIcon></Big>
            </GroupBody>
          </Group>
          <Group $w={50}>
            <GroupBody $center><Big $w={44}><BigIcon><CloseBoxI /></BigIcon></Big></GroupBody>
          </Group>
          <Group $w={100} $plain>
            <MiniBrand $left={26} $top={20}><SmallLogo s={44} /></MiniBrand>
          </Group>
        </Ribbon>
        <Desk>
          <Side>
            <SideHead>Setup<ChevronLeft /></SideHead>
            <SideList>
              <SideItem><FaCog size={15} color="#666" />EventPro Setup</SideItem>
              <SideItem $on>
                <Wrap $s={15}><FaGlobeAmericas size={14} color={BLUE} /><TinyGear size={7} color="#555" /></Wrap>EventProConnect Setup
              </SideItem>
              <SideItem>
                <Wrap $s={15}><FaRobot size={14} color={RED} /><TinyGear size={7} color="#555" /></Wrap>Virtual Assistant Setup
              </SideItem>
              <SideItem><FieldI />User Field Definition</SideItem>
              <SideItem><ModelI />Model Management</SideItem>
              <SideItem><Wrap $s={15}><NumberTwelve>12</NumberTwelve></Wrap>Sequence Numbers</SideItem>
              <SideItem><Wrap $s={15}><FaLock size={14} color="#e5b876" /></Wrap>Security</SideItem>
            </SideList>
            <Splitter>{[0, 1, 2, 3, 4, 5].map((n) => <i key={n} />)}</Splitter>
            <NavItem><FaHome size={14} color={BLUE} />My Workplace</NavItem>
            <NavItem><CalSide />Events</NavItem>
            <NavTray>
              <TrayCell><FaBed size={15} color={RED} /></TrayCell>
              <TrayCell><FaIndustry size={13} color={BLUE} /></TrayCell>
              <TrayCell><FaAddressBook size={13} color={BLUE} /></TrayCell>
              <TrayCell><MailI /></TrayCell>
              <TrayCell><ClipI /></TrayCell>
              <TrayCell><Chevron c="#666" w={8} /></TrayCell>
            </NavTray>
          </Side>
          <Main>
            <DocBar>
              <DocTab>
                <Wrap $s={16}><FaGlobeAmericas size={15} color={BLUE} /><TinyGear size={7} color="#555" /></Wrap>
                EventProConnect Setup
              </DocTab>
            </DocBar>
            <MainPad>
              <Box $h={178} $mt={6}>
                <Legend>General Settings</Legend>
                <FieldStack>
                  {["Area Type:", "Hide", "Menu Caption:", "Menu Tool Tip:", "Menu Image:", "Page Title Image:", "Allow Payments"].map((t) => (
                    <FieldRow key={t}>{t}</FieldRow>
                  ))}
                </FieldStack>
              </Box>
              <PanelTabs>
                <PanelTab>
                  <Wrap $s={15}>
                    <PageI s={14} c="#999" sw={1} />
                    <Over $r={-1} $b={-1}><Svg width={7} height={7} viewBox="0 0 7 7"><circle cx="3.500" cy="3.500" r="3.500" fill={BLUE} /><rect x="3" y="1" width="1.200" height="4.500" fill="#fff" /></Svg></Over>
                  </Wrap>
                  Page Definitions
                </PanelTab>
              </PanelTabs>
              <Panel>
                <MiniBar>
                  <MiniCell><PageI s={12} c="#555" sw={1.500} /></MiniCell>
                  <MiniCell><CloneI s={14} c={SAGE} c2="#6f9f90" /></MiniCell>
                  <MiniSep />
                  <MiniCell><CrossI s={13} sw={3} /></MiniCell>
                  <MiniSep />
                  <MiniCell><RelatedI s={14} c={GRAY} /></MiniCell>
                  <MiniSep />
                  <MiniCell><RelatedI s={14} c="#888" /></MiniCell>
                </MiniBar>
                <GridBlock>
                  <GridHead><GridHeadCell>Page Type</GridHeadCell></GridHead>
                  {[
                    ["New Attendee Details", "#f9f9f9", false],
                    ["New Attendee Contact", "#f0f0f0", false],
                    ["New Attendee Type", "#e6f1fb", true],
                    ["New Attendee Welcome", "#eeeeee", false],
                  ].map(([t, bg, sel]) => (
                    <GridRow key={t as string} $bg={bg as string}>
                      <RowMark>{sel ? <Tri /> : null}</RowMark>
                      <RowCell $bg={bg as string}>{t as string}</RowCell>
                    </GridRow>
                  ))}
                </GridBlock>
                <HScroll><HScrollBtn><Chevron c="#666" w={9} /></HScrollBtn></HScroll>
              </Panel>
            </MainPad>
          </Main>
        </Desk>
        <Status><Grip /></Status>
      </Win>

      {/* dialog window */}
      <Win $x={278} $y={81} $w={843} $h={408} $border="#0072c6">
        <LogoSlot $top={0}><LogoMark /></LogoSlot>
        <Header $h={48}>
          <TitleRow>
            <Qat>
              <QatCell><UpI /></QatCell>
              <QatCell><DownI /></QatCell>
              <QatCell><RefreshCw size={15} color={SAGE} strokeWidth={3} /></QatCell>
              <QatCell><Floppy w={13} /></QatCell>
              <QatCell><FloppyB b="x" w={15} /></QatCell>
              <QatCell><UndoI w={15} /></QatCell>
              <QatCell><CaretLines /></QatCell>
            </Qat>
            <Title $left={123}>New Attendee Type - Page Definition</Title>
            <WinCtl $right={2}>
              <WinBtn><Svg width={9} height={10} viewBox="0 0 9 10"><rect x="0" y="5" width="9" height="2" fill="#555" /></Svg></WinBtn>
              <WinBtn><Svg width={11} height={11} viewBox="0 0 11 11"><rect x="1" y="1" width="9" height="9" fill="none" stroke="#555" /><rect x="1" y="1" width="9" height="2" fill="#555" /></Svg></WinBtn>
              <WinBtn><Svg width={11} height={11} viewBox="0 0 11 11"><path d="M1 1L10 10M10 1L1 10" stroke="#555" strokeWidth="1.700" /></Svg></WinBtn>
            </WinCtl>
          </TitleRow>
          <TabRow>
            <RibbonTab $active $w={45}>Home</RibbonTab>
            <Collapse $right={13}><Chevron up c="#666" w={9} /></Collapse>
          </TabRow>
        </Header>
        <Ribbon $h={87} $top={5}>
          <Group $w={101}>
            <GroupBody>
              <Big $w={46}><BigIcon $pt={3}><PageI /></BigIcon>New</Big>
              <Big $w={48} $off><BigIcon><CloneI /></BigIcon>Clone...</Big>
            </GroupBody>
            <GroupLabel>Records Creation</GroupLabel>
          </Group>
          <Group $w={291}>
            <GroupBody>
              <Big $w={44}><BigIcon $pt={5}><Floppy /></BigIcon>Save</Big>
              <Big $w={58}><BigIcon><FloppyB b="x" /></BigIcon>Save and<br />Close</Big>
              <Big $w={82}><BigIcon><FloppyB b="new" /></BigIcon>Save and New</Big>
              <Big $w={60}><BigIcon><FloppyB b="clone" /></BigIcon>Save and<br />Clone</Big>
              <Big $w={42}><BigIcon $pt={5}><UndoI /></BigIcon>Cancel</Big>
            </GroupBody>
            <GroupLabel>Save</GroupLabel>
          </Group>
          <Group $w={27}>
            <GroupBody $col $pad={6}>
              <Small $h={29}><SmallIcon><SpellI w={16} /></SmallIcon></Small>
              <Small $h={29}><SmallIcon><CrossI s={14} sw={3} /></SmallIcon></Small>
            </GroupBody>
            <GroupLabel>E...</GroupLabel>
          </Group>
          <Group $w={121}>
            <GroupBody $center>
              <Big $w={70} $off><BigIcon $pt={3}><RelatedI /></BigIcon>Open Related<br />Record</Big>
            </GroupBody>
            <GroupLabel>Open Related Record</GroupLabel>
          </Group>
          <Group $w={77}>
            <GroupBody $col $pad={6}>
              <Small $h={29}><SmallIcon><RefreshCw size={F} color={SAGE} strokeWidth={2.800} /></SmallIcon>Refresh</Small>
              <Small $h={29}><SmallIcon><History size={F} color={BLUE} strokeWidth={2.800} /></SmallIcon>Audit Log</Small>
            </GroupBody>
            <GroupLabel>View</GroupLabel>
          </Group>
          <Group $w={111}>
            <GroupBody $col $pad={6} $mt={-4}>
              <Small $h={22}><SmallIcon><MagnifierI s={14} /></SmallIcon>Find</Small>
              <Small $h={22}><SmallIcon><UpI /></SmallIcon>Previous Record</Small>
              <Small $h={22}><SmallIcon><DownI /></SmallIcon>Next Record</Small>
            </GroupBody>
            <GroupLabel>Records Navigation</GroupLabel>
          </Group>
          <Group $w={49}>
            <GroupBody $center><Big $w={44}><BigIcon><CloseBoxI /></BigIcon>Close</Big></GroupBody>
            <GroupLabel>Close</GroupLabel>
          </Group>
          <Group $w={60} $plain>
            <MiniBrand $left={2} $top={27}><SmallLogo />Event<b>Pro</b></MiniBrand>
          </Group>
        </Ribbon>
        <Form>
          <Box $w={397} $h={45} $mt={5}>
            <Legend $pb={4}>Page Settings</Legend>
            <InputRow>
              <InputLabel>Page Type:</InputLabel>
              <ReadOnly>New Attendee Type</ReadOnly>
            </InputRow>
          </Box>
          <EdTabs>
            <EdTab $w={59} $on>Page Title</EdTab>
            <EdTab $w={79}>Page Message</EdTab>
            <EdTab $w={58}>Page Help</EdTab>
          </EdTabs>
          <EdPanel>
            <ToolRow $h={27}>
              <Tool><SerifB>B</SerifB></Tool>
              <Tool><SerifI>I</SerifI></Tool>
              <Tool><SerifU>U</SerifU></Tool>
              <Tool><Strike>abc</Strike></Tool>
              <Tool><Lines kind="l" /></Tool>
              <Tool><Lines kind="c" /></Tool>
              <Tool><Lines kind="r" /></Tool>
              <Tool><Lines kind="j" /></Tool>
              <ToolSep $r={5} />
              <Tool><SerifB $size={14}>A</SerifB></Tool>
              <Tool $w={16}><FaFillDrip size={13} color={BLUE} /></Tool>
              <Tool $w={23}><Svg width={6} height={4} viewBox="0 0 6 4"><path d="M0 0H6L3 4Z" fill="#555" /></Svg></Tool>
              <ToolSep $l={0} $r={0} />
              <Select $w={139} $ml={4}>Times New Roman<SelectBtn><Chevron c="#888" w={7} /></SelectBtn></Select>
              <Select $w={90} $ml={8}>3<SelectBtn><Chevron c="#888" w={7} /></SelectBtn></Select>
              <Select $w={90} $ml={8}>Normal<SelectBtn><Chevron c="#888" w={7} /></SelectBtn></Select>
            </ToolRow>
            <ToolRow $h={23} $pb={3}>
              <Tool><Scissors size={15} color="#aaa" /></Tool>
              <Tool><CopyI /></Tool>
              <Tool><PasteI /></Tool>
              <ToolSep />
              <Tool><UndoI w={14} /></Tool>
              <Tool><RedoI /></Tool>
              <Tool><EraserI /></Tool>
              <ToolSep $r={2} />
              <Tool><ScriptB>X<Sub>2</Sub></ScriptB></Tool>
              <Tool><ScriptB>X<Sup>2</Sup></ScriptB></Tool>
              <ToolSep $l={4} />
              <Tool><ListI num /></Tool>
              <Tool><ListI /></Tool>
              <ToolSep />
              <Tool><IndentI /></Tool>
              <Tool><IndentI out /></Tool>
              <ToolSep $r={4} />
              <Tool><StampI /></Tool>
              <Tool><StampI bars /></Tool>
              <Tool><PictureI /></Tool>
            </ToolRow>
            <Editor>
              <EditArea><EditText>Attendee Type</EditText></EditArea>
              <VScroll><Chevron up c="#c8c8c8" w={12} sw={2.500} /><Chevron c="#c8c8c8" w={12} sw={2.500} /></VScroll>
            </Editor>
            <ModeTabs>
              <ModeTab $w={44} $on>Design</ModeTab>
              <ModeTab $w={31}>Html</ModeTab>
            </ModeTabs>
          </EdPanel>
        </Form>
        <Status><Grip /></Status>
      </Win>
    </>
  );
}
